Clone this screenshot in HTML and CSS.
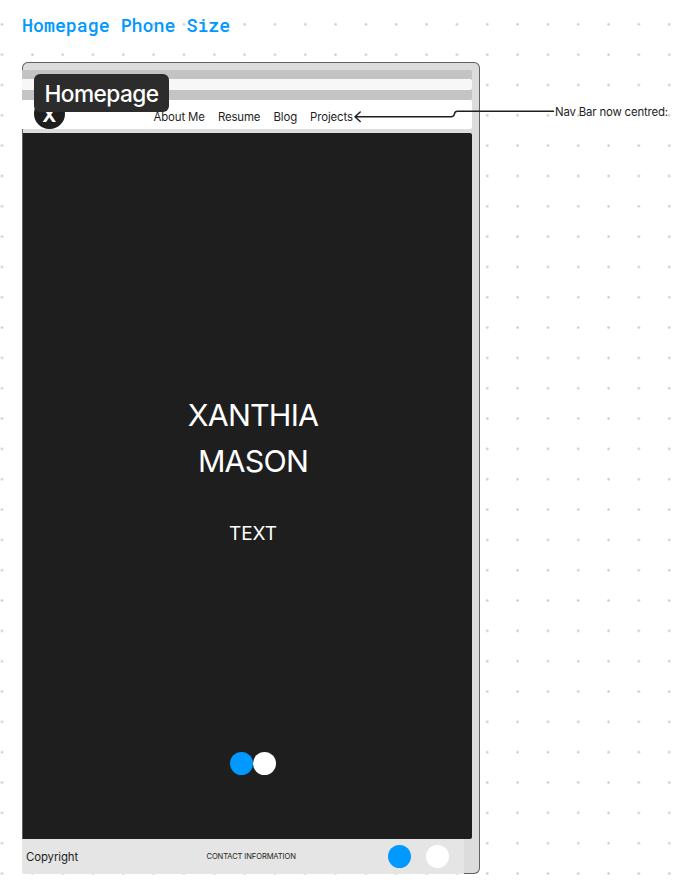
FILE: index.html
```html
<!DOCTYPE html>
<html lang="en">
<head>
<meta charset="utf-8">
<title>Homepage Phone Size</title>
<link rel="stylesheet" href="styles.css">
</head>
<body>
<main class="board">
  <h1 class="board-title">Homepage Phone Size</h1>
  <section class="phone">
    <div class="browser-bar"><div class="address"></div></div>
    <header class="navbar">
      <div class="logo">X</div>
      <nav class="links"><a>About Me</a><a>Resume</a><a>Blog</a><a>Projects</a></nav>
    </header>
    <div class="hero">
      <h2 class="name">XANTHIA<br>MASON</h2>
      <p class="text">TEXT</p>
      <div class="pager"><i class="dot blue"></i><i class="dot"></i></div>
    </div>
    <footer class="footer">
      <span class="copyright">Copyright</span>
      <span class="contact">CONTACT INFORMATION</span>
      <div class="social"><i class="dot blue"></i><i class="dot"></i></div>
    </footer>
    <div class="label">Homepage</div>
  </section>
  <svg class="connector" width="204" height="20" viewBox="0 0 204 20">
    <path d="M2 12.7H98Q101 12.7 101.4 10Q101.9 7.2 104.500 7.200H200.500M7.200 8L2 12.700L7.200 17.500"/>
  </svg>
  <p class="note">Nav Bar now centred:</p>
</main>
</body>
</html>
```
FILE: styles.css
```css
* { box-sizing: border-box; }
body { margin: 0; font-family: Inter, sans-serif; color: #1e1e1e; }
h1, h2, p { margin: 0; font-weight: 400; }
.board {
  position: relative;
  width: 698px;
  height: 896px;
  overflow: hidden;
  padding: 11px 0 0 22px;
  background: radial-gradient(circle at center, #c9c9c9 0.8px, transparent 1.6px) -13.17px 9.17px / 30.33px 30.33px #fff;
}
.board-title {
  height: 51px;
  font: 500 18.28px/28px "Roboto Mono", "DejaVu Sans Mono", monospace;
  color: #0099ff;
  white-space: nowrap;
}
.phone {
  position: relative;
  width: 458px;
  height: 812px;
  padding-top: 8px;
  background: #dcdcdc;
  border-radius: 6px;
  box-shadow: inset 0 0 0 1px #606060;
}
.browser-bar {
  width: 450px;
  height: 30px;
  padding-top: 9px;
  background: #c4c4c4;
  border-radius: 0 2px 2px 0;
}
.address { height: 11px; background: #f7f7f7; border-radius: 0 2px 2px 0; }
.navbar {
  position: relative;
  display: flex;
  align-items: center;
  width: 450px;
  height: 29px;
  padding: 5px 0 0 12px;
  background: #fff;
  border-radius: 0 2px 2px 0;
}
.logo {
  flex: none;
  width: 30.500px;
  height: 30.500px;
  margin-top: -7px;
  border-radius: 50%;
  background: #1e1e1e;
  color: #fff;
  font-size: 19px;
  font-weight: 700;
  line-height: 35px;
  text-align: center;
}
.links { display: flex; gap: 13.100px; margin-left: 89px; font-size: 11.400px; letter-spacing: -0.120px; line-height: 14px; white-space: nowrap; }
.hero {
  display: flex;
  flex-direction: column;
  align-items: center;
  width: 449px;
  height: 706px;
  margin: 4px 0 0 1px;
  padding: 260.200px 0 64px 11px;
  background: #1e1e1e;
  border-radius: 0 2px 2px 0;
  color: #fff;
}
.name { font-size: 30.400px; line-height: 45.500px; letter-spacing: -0.800px; text-align: center; }
.text { margin-top: 36.500px; font-size: 19px; line-height: 25px; letter-spacing: -0.100px; }
.pager { display: flex; margin-top: auto; }
.dot { width: 23px; height: 23px; border-radius: 50%; background: #fff; }
.blue { background: #0099ff; }
.footer {
  display: flex;
  align-items: center;
  width: 442px;
  height: 35px;
  padding: 0 15px 0 4px;
  background: #e5e5e5;
  border-radius: 0 0 0 2px;
}
.copyright { width: 180.500px; font-size: 11.400px; letter-spacing: -0.100px; }
.contact { font-size: 7.600px; letter-spacing: -0.130px; white-space: nowrap; }
.social { display: flex; gap: 15px; margin-left: auto; }
.label {
  position: absolute;
  left: 12px;
  top: 12px;
  width: 135px;
  height: 38px;
  border-radius: 6px;
  background: #2c2c2c;
  color: #fff;
  font-size: 22.700px;
  font-weight: 500;
  letter-spacing: -0.550px;
  line-height: 40px;
  text-align: center;
}
.connector { position: absolute; left: 353px; top: 104px; fill: none; stroke: #1e1e1e; stroke-width: 1.500; stroke-linecap: round; stroke-linejoin: round; }
.note { position: absolute; left: 555px; top: 104px; font-size: 11.400px; letter-spacing: -0.170px; line-height: 16px; white-space: nowrap; }
```
